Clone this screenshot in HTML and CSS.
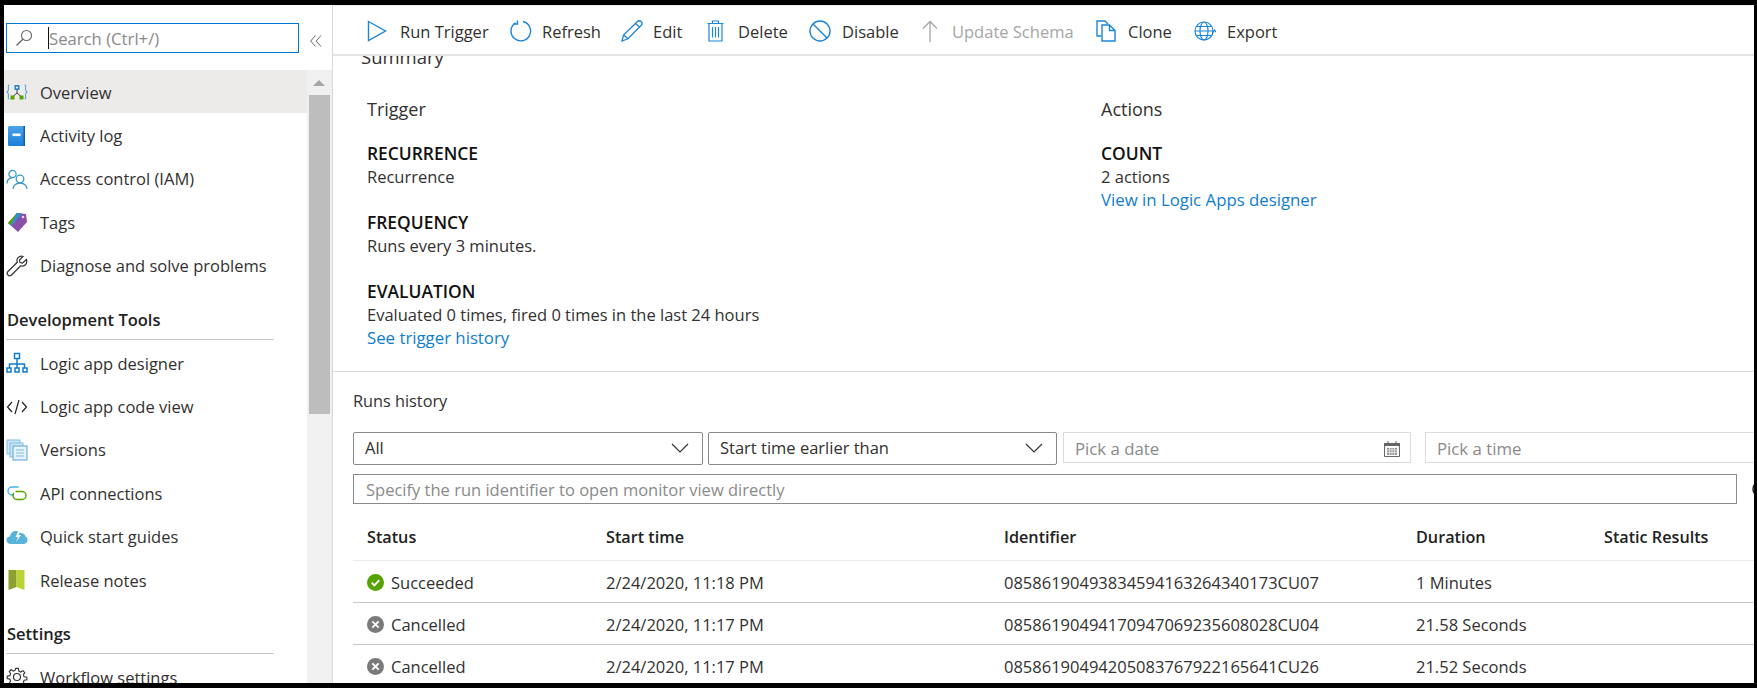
FILE: index.html
```html
<!DOCTYPE html>
<html lang="en">
<head>
<meta charset="utf-8">
<title>Logic app overview</title>
<link rel="stylesheet" href="styles.css">
</head>
<body>
<div class="app">
  <aside class="sidebar">
    <div class="search-row">
      <div class="search">
        <svg class="search-icon" viewBox="0 0 18 18"><circle cx="11.5" cy="6.5" r="5" fill="none" stroke="#666" stroke-width="1.1"/><path d="M7.8 10.2 1.5 16.5" stroke="#666" stroke-width="1.3" fill="none"/></svg>
        <span class="caret"></span>
        <span class="search-text">Search (Ctrl+/)</span>
      </div>
      <svg class="collapse" viewBox="0 0 12 12"><path d="M5.5.5 0.7 6l4.8 5.5M11 .5 6.200 6 11 11.500" fill="none" stroke="#666" stroke-width="1"/></svg>
    </div>
    <div class="nav-wrap">
      <nav class="nav">
        <a class="item active"><svg class="ico" viewBox="0 0 22 22"><path d="M3.500 4C1.500 4 2.500 6 2.500 8c0 2-1.500 3-1.500 3s1.500 1 1.500 3-1 4 1 4M18.500 4c2 0 1 2 1 4 0 2 1.500 3 1.500 3s-1.500 1-1.500 3 1 4-1 4" fill="none" stroke="#59a5d8" stroke-width="1.100"/><path d="M11 8v4M6.500 16l4.500-4 4.500 4" fill="none" stroke="#444" stroke-width="1"/><rect x="8.500" y="4" width="5" height="5" fill="#2c84c8"/><circle cx="11" cy="6.500" r="1" fill="#fff"/><rect x="4.500" y="14.500" width="4" height="4" fill="#57a300"/><rect x="13.500" y="14.500" width="4" height="4" fill="#57a300"/></svg><span>Overview</span></a>
        <a class="item"><svg class="ico" viewBox="0 0 22 22"><defs><linearGradient id="book" x1="0" y1="0" x2="0" y2="1"><stop offset="0" stop-color="#4aa3ea"/><stop offset="1" stop-color="#1a7fd8"/></linearGradient></defs><rect x="2" y="1" width="17" height="20" rx="1.500" fill="url(#book)"/><path d="M17.500 1h1.500v20h-1.500z" fill="#0f5fa8"/><rect x="6.500" y="8.500" width="8" height="2.600" fill="#fff"/></svg><span>Activity log</span></a>
        <a class="item"><svg class="ico" viewBox="0 0 22 22" fill="none" stroke="#3a9bc7" stroke-width="1.300"><circle cx="6.500" cy="6" r="3.600"/><path d="M1 15.500c0-3 2-5 4.500-5.500"/><circle cx="14" cy="11" r="3.800"/><path d="M7 21c0-3.500 3-6 7-6s7 2.500 7 6"/></svg><span>Access control (IAM)</span></a>
        <a class="item"><svg class="ico" viewBox="0 0 22 22"><path d="M2 12 11 2l9 1 1 8-9 10z" fill="#8a4fa8"/><path d="M2 12 11 2l4 .4L4.500 14z" fill="#57a300"/><path d="M11 2l4 .4 1 .1L5.500 15 4.500 14z" fill="#2f8fd0"/><circle cx="17" cy="6" r="1.300" fill="#e6d8ef"/></svg><span>Tags</span></a>
        <a class="item"><svg class="ico" viewBox="0 0 22 22"><path d="M20.500 4.500 16.500 8l-2.500-.5-.5-2.500L17 1.500c-2.500-1-5.500.5-6 3-.2 1 0 2 .3 2.800L2 16.500c-1 1-1 2.500 0 3.500s2.500 1 3.500 0l9.300-9.200c2.500.8 5-.3 5.700-2.800.3-1 .3-2.200 0-3.500z" fill="none" stroke="#333" stroke-width="1.200"/></svg><span>Diagnose and solve problems</span></a>

        <h3 class="group">Development Tools</h3>
        <a class="item"><svg class="ico" viewBox="0 0 22 22" fill="none" stroke="#0f7dcf" stroke-width="1.500"><rect x="8.500" y="1.500" width="5" height="5"/><path d="M11 6.500V12M3.500 16v-4h15v4M11 12v4"/><rect x="1" y="16" width="4" height="4"/><rect x="9" y="16" width="4" height="4"/><rect x="17" y="16" width="4" height="4"/></svg><span>Logic app designer</span></a>
        <a class="item"><svg class="ico" viewBox="0 0 22 22" fill="none" stroke="#222" stroke-width="1.200"><path d="M6 6 1.500 11 6 16M16 6l4.500 5-4.500 5M13 4 9 18"/></svg><span>Logic app code view</span></a>
        <a class="item"><svg class="ico" viewBox="0 0 22 22"><rect x="1" y="1" width="13" height="14" fill="#cfe6f5" stroke="#7fbde6"/><rect x="4" y="4" width="13" height="14" fill="#cfe6f5" stroke="#7fbde6"/><rect x="7" y="7" width="14" height="14" fill="#e6f3fb" stroke="#59a5d8"/><path d="M10 11h8M10 14h8M10 17h8" stroke="#7fbde6"/></svg><span>Versions</span></a>
        <a class="item"><svg class="ico" viewBox="0 0 22 22" fill="none" stroke-width="1.400"><path d="M12.500 5H6a4 4 0 0 0 0 8h2" stroke="#3fb6e8"/><path d="M9.500 9.500H16a4 4 0 0 1 0 8h-5a4 4 0 0 1-3.200-6.500" stroke="#57a300"/></svg><span>API connections</span></a>
        <a class="item"><svg class="ico" viewBox="0 0 22 22"><path d="M5 18C2 18 .5 16 .5 14s1.500-3.500 3.500-3.500C4.500 7 7 5 10 5c2 0 3.500 1 4.500 2 3 0 4.500 1.500 5 3.500 1.500.5 2 2 2 3.500 0 2.500-2 4-4 4z" fill="#59b4d9"/><path d="M13 4 9.500 11H12l-2 5 5-7h-2.500L15 4z" fill="#fff"/></svg><span>Quick start guides</span></a>
        <a class="item"><svg class="ico" viewBox="0 0 22 22"><path d="M2.500 1h8v17l-8 3z" fill="#8ca030"/><path d="M10.500 1h8v20l-8-3z" fill="#b8d432"/></svg><span>Release notes</span></a>

        <h3 class="group">Settings</h3>
        <a class="item"><svg class="ico" viewBox="0 0 22 22" fill="none" stroke="#333" stroke-width="1.200"><circle cx="11" cy="11" r="3.500"/><path d="M9.500 1.500h3l.5 3 2 1 2.500-1.500 2 2.200-1.500 2.500.8 2 3 .5v2.800l-3 .5-.8 2 1.500 2.500-2 2.200-2.500-1.500-2 1-.5 3h-3l-.5-3-2-1L4.500 20l-2-2.200L4 15.300l-.8-2-3-.5V10l3-.5.8-2L2.500 5l2-2.200L7 4.500l2-1z" transform="translate(1 1) scale(.91)"/></svg><span>Workflow settings</span></a>
      </nav>
      <div class="scrollbar">
        <span class="arrow"></span>
        <span class="thumb"></span>
      </div>
    </div>
  </aside>

  <main class="main">
    <header class="toolbar">
      <a class="tool tool-run"><svg viewBox="0 0 20 22"><path d="M1.500 1.500 18.500 11 1.500 20.500z" fill="none" stroke="#1d85d8" stroke-width="1.400"/></svg><span>Run Trigger</span></a>
      <a class="tool tool-refresh"><svg viewBox="0 0 22 22" fill="none" stroke="#1d85d8" stroke-width="1.400"><path d="M13 1.500A9.800 9.800 0 1 1 5.500 2.800"/><path d="M7.500 .5V4H3.500"/></svg><span>Refresh</span></a>
      <a class="tool tool-edit"><svg viewBox="0 0 22 22" fill="none" stroke="#1d85d8" stroke-width="1.300"><path d="M1 21l1.500-6L16.500 1.500c1-1 2.500-1 3.500 0s1.500 2.500.5 3.500L7 18.800zM2.500 15 7 18.800M14.500 3.500l4.500 4"/></svg><span>Edit</span></a>
      <a class="tool tool-delete"><svg viewBox="0 0 17 22" fill="none" stroke="#1d85d8" stroke-width="1.200"><path d="M.5 3.500h16M5.500 3.500V1h6v2.500M2 3.500V21h13V3.500M5.500 7v10.500M8.500 7v10.500M11.500 7v10.500"/></svg><span>Delete</span></a>
      <a class="tool tool-disable"><svg viewBox="0 0 22 22" fill="none" stroke="#1d85d8" stroke-width="1.400"><circle cx="11" cy="11" r="10"/><path d="M4 4l14 14"/></svg><span>Disable</span></a>
      <a class="tool tool-update disabled"><svg viewBox="0 0 16 22" fill="none" stroke="#a6a6a6" stroke-width="1.300"><path d="M8 22V1.500M1 8.500l7-7 7 7"/></svg><span>Update Schema</span></a>
      <a class="tool tool-clone"><svg viewBox="0 0 20 22" fill="none" stroke="#1d85d8" stroke-width="1.400"><path d="M5.500 16H1V1h8l3 3"/><path d="M6 5h7.500l5.500 5.500V21H6zM13.500 5v5.500H19"/></svg><span>Clone</span></a>
      <a class="tool tool-export"><svg viewBox="0 0 22 22" fill="none" stroke="#1d85d8" stroke-width="1.200"><circle cx="10" cy="11" r="9"/><ellipse cx="10" cy="11" rx="4" ry="9"/><path d="M1 11h18M2.500 6.500h15M2.500 15.500h15"/><path d="M18.500 13l2-3 1.500 2" stroke-width="1.300"/></svg><span>Export</span></a>
    </header>

    <div class="content">
      <section class="summary">
        <h2 class="summary-title">Summary</h2>
        <div class="summary-cols">
          <div class="summary-col">
            <h3 class="col-title">Trigger</h3>
            <div class="field">
              <div class="label">RECURRENCE</div>
              <div class="value">Recurrence</div>
            </div>
            <div class="field">
              <div class="label">FREQUENCY</div>
              <div class="value">Runs every 3 minutes.</div>
            </div>
            <div class="field">
              <div class="label">EVALUATION</div>
              <div class="value">Evaluated 0 times, fired 0 times in the last 24 hours</div>
              <a class="link">See trigger history</a>
            </div>
          </div>
          <div class="summary-col">
            <h3 class="col-title">Actions</h3>
            <div class="field">
              <div class="label">COUNT</div>
              <div class="value">2 actions</div>
              <a class="link">View in Logic Apps designer</a>
            </div>
          </div>
        </div>
      </section>

      <section class="runs">
        <h3 class="runs-title">Runs history</h3>
        <div class="filters">
          <div class="select sel-1"><span>All</span><svg viewBox="0 0 18 10"><path d="M1 1l8 8 8-8" fill="none" stroke="#333" stroke-width="1.200"/></svg></div>
          <div class="select sel-2"><span>Start time earlier than</span><svg viewBox="0 0 18 10"><path d="M1 1l8 8 8-8" fill="none" stroke="#333" stroke-width="1.200"/></svg></div>
          <div class="pick pick-date"><span>Pick a date</span><svg viewBox="0 0 16 16"><path d="M.5 2.500h15v13H.5z" fill="none" stroke="#666"/><path d="M0 2h16v3H0z" fill="#666"/><path d="M4 0v2M12 0v2" stroke="#666"/><path d="M3 7h10v7H3z" fill="#999"/><path d="M3 9h10M3 11.500h10M5.500 7v7M8 7v7M10.500 7v7" stroke="#fff" stroke-width=".6"/></svg></div>
          <div class="pick pick-time"><span>Pick a time</span></div>
        </div>
        <div class="id-row">
          <div class="id-input">Specify the run identifier to open monitor view directly</div>
          <svg class="id-icon" viewBox="0 0 16 16"><circle cx="8" cy="8" r="7" fill="none" stroke="#222" stroke-width="1.500"/></svg>
        </div>
        <div class="table">
          <div class="row head">
            <div class="cell first">Status</div>
            <div class="cell">Start time</div>
            <div class="cell">Identifier</div>
            <div class="cell">Duration</div>
            <div class="cell">Static Results</div>
          </div>
          <div class="row">
            <div class="cell first status"><svg viewBox="0 0 16 16"><circle cx="8" cy="8" r="8" fill="#57a300"/><path d="M4.500 8.200 7 10.700l4.500-5" fill="none" stroke="#fff" stroke-width="1.800"/></svg>Succeeded</div>
            <div class="cell">2/24/2020, 11:18 PM</div>
            <div class="cell">08586190493834594163264340173CU07</div>
            <div class="cell">1 Minutes</div>
            <div class="cell"></div>
          </div>
          <div class="row">
            <div class="cell first status"><svg viewBox="0 0 16 16"><circle cx="8" cy="8" r="8" fill="#7a7a7a"/><path d="M5 5l6 6M11 5l-6 6" fill="none" stroke="#fff" stroke-width="1.800"/></svg>Cancelled</div>
            <div class="cell">2/24/2020, 11:17 PM</div>
            <div class="cell">08586190494170947069235608028CU04</div>
            <div class="cell">21.58 Seconds</div>
            <div class="cell"></div>
          </div>
          <div class="row">
            <div class="cell first status"><svg viewBox="0 0 16 16"><circle cx="8" cy="8" r="8" fill="#7a7a7a"/><path d="M5 5l6 6M11 5l-6 6" fill="none" stroke="#fff" stroke-width="1.800"/></svg>Cancelled</div>
            <div class="cell">2/24/2020, 11:17 PM</div>
            <div class="cell">08586190494205083767922165641CU26</div>
            <div class="cell">21.52 Seconds</div>
            <div class="cell"></div>
          </div>
        </div>
      </section>
    </div>
  </main>
</div>
</body>
</html>
```
FILE: styles.css
```css
* { box-sizing: border-box; }
html, body { height: 100%; }
body {
  margin: 0;
  padding: 5px 3px 5px 4px;
  background: #000;
  overflow: hidden;
  font-family: "Open Sans", "Noto Sans", sans-serif;
  font-size: 16.5px;
  color: #323130;
}
h2, h3 { margin: 0; font-weight: 400; }
a { display: block; }

.app { display: flex; height: 678px; background: #fff; overflow: hidden; }

/* Sidebar */
.sidebar { flex: 0 0 329px; display: flex; flex-direction: column; border-right: 1px solid #d9d9d9; overflow: hidden; }
.search-row { flex: 0 0 65px; display: flex; align-items: flex-start; padding: 18px 0 0 2px; }
.search { width: 293px; height: 30px; border: 1px solid #0078d4; display: flex; align-items: center; padding-left: 8px; }
.search-icon { width: 18px; height: 18px; flex: none; }
.caret { width: 1px; height: 22px; background: #111; margin-left: 15px; }
.search-text { color: #8a8a8a; font-size: 16.7px; }
.collapse { width: 12px; height: 12px; margin: 12px 0 0 11px; }

.nav-wrap { display: flex; flex: 1; min-height: 0; }
.nav { flex: 0 0 303px; }
.item { height: 43.4px; display: flex; align-items: center; gap: 12px; padding-left: 2px; padding-top: 1px; white-space: nowrap; }
.item.active { background: #edebe9; }
.ico { width: 22px; height: 22px; flex: none; }
.group { height: 53px; margin: 0 33px 1px 2px; border-bottom: 1px solid #c8c8c8; padding: 21px 0 0 1px; font-weight: 600; font-size: 16.5px; line-height: 24px; color: #222; }

.scrollbar { flex: 0 0 25px; background: #f0f0f0; display: flex; flex-direction: column; align-items: center; padding: 10px 1px 0 0; }
.arrow { width: 0; height: 0; border-left: 6px solid transparent; border-right: 6px solid transparent; border-bottom: 6px solid #a6a6a6; }
.thumb { width: 21px; height: 319px; background: #bdbdbd; margin-top: 9px; }

/* Main */
.main { flex: 1; min-width: 0; display: flex; flex-direction: column; border-top: 1px solid #eee; }
.toolbar { flex: 0 0 50px; display: flex; align-items: center; padding: 2px 0 0 34px; border-bottom: 2px solid #e3e3e3; white-space: nowrap; }
.tool { display: flex; align-items: center; }
.tool svg { height: 22px; flex: none; }
.tool-run { width: 143px; } .tool-run svg { width: 20px; margin-right: 13px; }
.tool-refresh { width: 111px; } .tool-refresh svg { width: 22px; margin-right: 10px; }
.tool-edit { width: 86px; } .tool-edit svg { width: 22px; margin-right: 10px; }
.tool-delete { width: 102px; } .tool-delete svg { width: 17px; margin-right: 14px; }
.tool-disable { width: 113px; } .tool-disable svg { width: 22px; margin-right: 11px; }
.tool-update { width: 174px; } .tool-update svg { width: 16px; margin-right: 14px; }
.tool-clone { width: 98px; } .tool-clone svg { width: 20px; margin-right: 12px; }
.tool-export svg { width: 22px; margin-right: 11px; }
.disabled { color: #a6a6a6; }

.content { flex: 1; min-height: 0; overflow: hidden; }
.summary { padding: 0 0 21px 28px; height: 326px; }
.summary-title { font-size: 18.5px; line-height: 24px; margin-top: -11px; }
.summary-cols { display: grid; grid-template-columns: 734px 1fr; padding-left: 6px; margin-top: 28px; }
.col-title { font-size: 18px; line-height: 24px; height: 44px; }
.field { margin-bottom: 22px; }
.label { font-weight: 600; font-size: 17.4px; line-height: 24px; color: #111; }
.value { line-height: 23px; }
.link { line-height: 23px; font-size: 16.8px; color: #0f7dcf; }

.runs { border-top: 1px solid #d8d8d8; padding-top: 17px; }
.runs-title { font-size: 16.3px; line-height: 24px; padding-left: 20px; }
.filters { display: flex; align-items: flex-start; margin: 19px 0 0 20px; white-space: nowrap; }
.select { height: 33px; border: 1px solid #8a8886; border-radius: 2px; display: flex; align-items: center; justify-content: space-between; padding: 0 13px 2px 11px; flex: none; }
.select svg { width: 18px; height: 10px; }
.sel-1 { width: 350px; margin-right: 5px; }
.sel-2 { width: 349px; margin-right: 6px; }
.pick { height: 31px; border: 1px solid #dcdcdc; display: flex; align-items: center; justify-content: space-between; padding: 2px 10px 0 11px; color: #8a8a8a; flex: none; font-size: 16.8px; }
.pick svg { width: 16px; height: 16px; }
.pick-date { width: 348px; margin-right: 14px; }
.pick-time { width: 340px; }
.id-row { display: flex; align-items: center; margin: 9px 0 0 20px; gap: 15px; }
.id-input { flex: 0 0 1384px; height: 30px; border: 1px solid #8a8a8a; padding-left: 12px; line-height: 29px; color: #8a8a8a; }
.id-icon { width: 16px; height: 16px; flex: none; }

.table { margin: 10px 0 0 20px; }
.row { display: grid; grid-template-columns: 253px 398px 412px 188px 1fr; height: 42px; padding-top: 1px; align-items: center; border-bottom: 1px solid #c8c8c8; white-space: nowrap; }
.row.head { height: 47px; padding-top: 0; border-bottom-color: #ebebeb; font-weight: 600; font-size: 16.2px; color: #222; }
.first { padding-left: 14px; }
.status { display: flex; align-items: center; gap: 7px; }
.status svg { width: 17px; height: 17px; flex: none; }
```
